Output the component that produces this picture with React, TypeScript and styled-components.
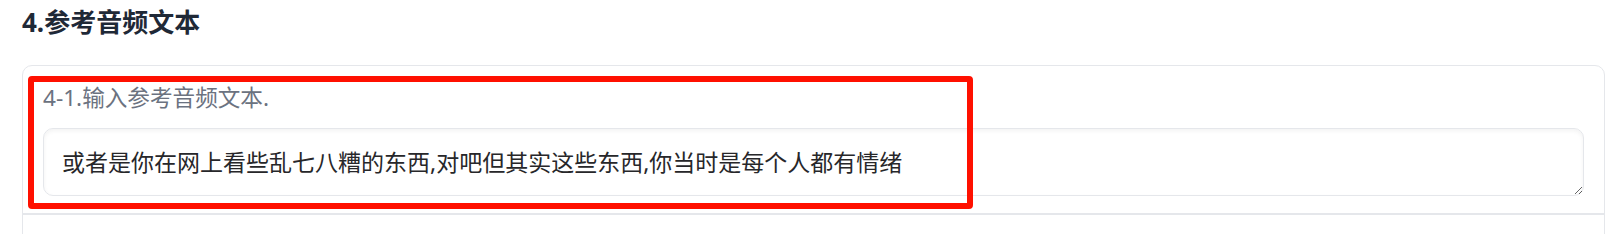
import React from "react";
import styled, { createGlobalStyle } from "styled-components";

const GlobalStyle = createGlobalStyle`
  html, body {
    margin: 0;
    padding: 0;
    background: #ffffff;
  }
  body {
    font-family: "Noto Sans", "Noto Sans CJK SC", sans-serif;
  }
`;

const Page = styled.div`
  padding: 5px 16px 0 22px;
  height: 234px;
  overflow: hidden;
  box-sizing: border-box;
`;

const Heading = styled.h2`
  margin: 0;
  font-size: 26px;
  line-height: 34px;
  font-weight: 700;
  color: #1f2937;
`;

const Card = styled.div`
  position: relative;
  margin-top: 26px;
  border: 1px solid #e5e7eb;
  border-radius: 10px;
  background: #ffffff;
`;

const Block = styled.div`
  display: flex;
  flex-direction: column;
  gap: 16px;
  padding: 18px 20px 17px 20px;
  border-bottom: 2px solid #e5e7eb;
`;

const Label = styled.label`
  font-size: 22.6px;
  line-height: 28px;
  color: #6b7280;
`;

const TextArea = styled.textarea`
  display: block;
  box-sizing: border-box;
  width: 100%;
  height: 68px;
  padding: 17px 18px;
  border: 1px solid #e5e7eb;
  border-radius: 10px;
  box-shadow: inset 0 2px 4px rgba(0, 0, 0, 0.05);
  font-family: "Noto Sans", "Noto Sans CJK SC", sans-serif;
  font-size: 23px;
  line-height: 32px;
  color: #27272a;
  background: #ffffff;
  resize: vertical;
  outline: none;
`;

const EmptyBlock = styled.div`
  height: 40px;
`;

const Highlight = styled.div`
  position: absolute;
  left: 5px;
  top: 10px;
  width: 945px;
  height: 133px;
  box-sizing: border-box;
  border: 6px solid #ff1000;
  border-radius: 4px;
  pointer-events: none;
`;

export default function App() {
  return (
    <>
      <GlobalStyle />
      <Page>
        <Heading>4.参考音频文本</Heading>
        <Card>
          <Block>
            <Label>4-1.输入参考音频文本.</Label>
            <TextArea
              rows={1}
              defaultValue="或者是你在网上看些乱七八糟的东西,对吧但其实这些东西,你当时是每个人都有情绪"
            />
          </Block>
          <EmptyBlock />
          <Highlight />
        </Card>
      </Page>
    </>
  );
}
